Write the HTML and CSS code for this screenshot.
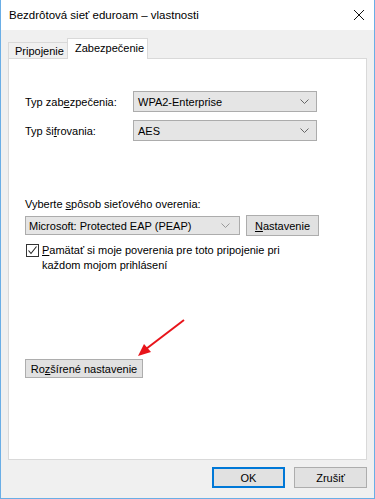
FILE: index.html
```html
<!DOCTYPE html>
<html>
<head>
    <title>Bezdrôtová sieť eduroam – vlastnosti</title>
    <link rel="stylesheet" href="styles.css">
</head>
<body>
    <div class="window">
        <div class="titlebar">
            <span class="title">Bezdrôtová sieť eduroam – vlastnosti</span>
            <svg class="close" width="12" height="12" viewBox="0 0 12 12">
                <path d="M1 1 L11 11 M11 1 L1 11" stroke="#111" stroke-width="1" fill="none"/>
            </svg>
        </div>
        <div class="client">
            <div class="tabs">
                <div class="tab">Pripojenie</div>
                <div class="tab active">Zabezpečenie</div>
            </div>
            <div class="panel">
                <div class="form-grid">
                    <label>Typ zab<u>e</u>zpečenia:</label>
                    <div class="select">
                        <span>WPA2-Enterprise</span>
                        <svg width="9" height="5" viewBox="0 0 9 5"><path d="M0.5 0.5 L4.5 4.5 L8.5 0.5" stroke="#666" fill="none"/></svg>
                    </div>
                    <label>Typ ši<u>f</u>rovania:</label>
                    <div class="select">
                        <span>AES</span>
                        <svg width="9" height="5" viewBox="0 0 9 5"><path d="M0.5 0.5 L4.5 4.5 L8.5 0.5" stroke="#666" fill="none"/></svg>
                    </div>
                </div>

                <div class="auth">
                    <div class="auth-label">Vyberte <u>s</u>pôsob sieťového overenia:</div>
                    <div class="auth-row">
                        <div class="select wide">
                            <span>Microsoft: Protected EAP (PEAP)</span>
                            <svg width="9" height="5" viewBox="0 0 9 5"><path d="M0.5 0.5 L4.5 4.5 L8.5 0.5" stroke="#999" fill="none"/></svg>
                        </div>
                        <button class="btn settings"><u>N</u>astavenie</button>
                    </div>
                    <div class="check-row">
                        <span class="checkbox">
                            <svg width="11" height="11" viewBox="0 0 11 11"><path d="M1.5 5.5 L4 8.5 L9.5 1.5" stroke="#222" stroke-width="1.1" fill="none"/></svg>
                        </span>
                        <span class="check-text"><u>P</u>amätať si moje poverenia pre toto pripojenie pri<br>každom mojom prihlásení</span>
                    </div>
                </div>

                <div class="advanced">
                    <button class="btn adv">Ro<u>z</u>šírené nastavenie</button>
                    <svg class="arrow" width="60" height="50" viewBox="0 0 60 50">
                        <path d="M56 2 L18 31" stroke="#e8141a" stroke-width="2" fill="none"/>
                        <path d="M10 38 L16 26 L23 34 Z" fill="#e8141a"/>
                    </svg>
                </div>
            </div>
            <div class="footer">
                <button class="btn ok">OK</button>
                <button class="btn">Zrušiť</button>
            </div>
        </div>
    </div>
</body>
</html>
```

FILE: styles.css
```css
body {
    margin: 0;
    font-family: 'Liberation Sans', Arial, sans-serif;
    font-size: 11px;
    color: #000;
    background-color: #fff;
}
.window {
    width: 375px;
    height: 499px;
    box-sizing: border-box;
    border: 1px solid #6aaee6;
    border-top: none;
    display: flex;
    flex-direction: column;
}
.titlebar {
    height: 30px;
    background-color: #fff;
    display: flex;
    align-items: center;
    justify-content: space-between;
    padding: 0 9px 0 8px;
    flex-shrink: 0;
}
.title {
    font-size: 11.5px;
}
.client {
    flex: 1;
    background-color: #f0f0f0;
    padding: 8px 7px 0 7px;
    display: flex;
    flex-direction: column;
}
.tabs {
    display: flex;
    align-items: flex-end;
    height: 20px;
}
.tab {
    width: 52px;
    height: 15px;
    line-height: 16px;
    padding-left: 6px;
    box-sizing: content-box;
    border: 1px solid #d9d9d9;
    border-bottom: none;
    border-right: none;
    background-color: #f0f0f0;
}
.tab.active {
    width: 72px;
    height: 20px;
    line-height: 18px;
    background-color: #fff;
    padding-left: 7px;
    margin-bottom: -1px;
    position: relative;
    z-index: 1;
    border-right: 1px solid #d9d9d9;
}
.panel {
    height: 402px;
    background-color: #fff;
    border: 1px solid #d9d9d9;
    padding: 32px 47px 0 16px;
    box-sizing: border-box;
}
.form-grid {
    display: grid;
    grid-template-columns: 108px 184px;
    row-gap: 8px;
    align-items: center;
}
.select {
    height: 21px;
    box-sizing: border-box;
    border: 1px solid #acacac;
    background-color: #e5e5e5;
    display: flex;
    align-items: center;
    justify-content: space-between;
    padding: 0 7px 0 4px;
}
.select svg {
    flex-shrink: 0;
}
.auth {
    margin-top: 57px;
}
.auth-label {
    margin-bottom: 5px;
}
.auth-row {
    display: flex;
    gap: 6px;
    align-items: center;
}
.select.wide {
    width: 215px;
    height: 19px;
    padding-right: 9px;
    padding-left: 3px;
}
.btn {
    font-family: 'Liberation Sans', Arial, sans-serif;
    font-size: 11px;
    color: #000;
    background-color: #e1e1e1;
    border: 1px solid #adadad;
    padding: 0;
    height: 21px;
    box-sizing: border-box;
    white-space: nowrap;
}
.settings {
    width: 73px;
}
.check-row {
    display: flex;
    margin-top: 8px;
    align-items: flex-start;
}
.checkbox {
    width: 13px;
    height: 13px;
    box-sizing: border-box;
    border: 1px solid #333;
    display: flex;
    align-items: center;
    justify-content: center;
    margin: 0 3px 0 1px;
    flex-shrink: 0;
}
.check-text {
    line-height: 15px;
    margin-top: -1px;
    white-space: nowrap;
}
.advanced {
    position: relative;
    margin-top: 86px;
}
.adv {
    width: 118px;
    height: 19px;
}
.arrow {
    position: absolute;
    left: 103px;
    top: -41px;
}
.footer {
    display: flex;
    justify-content: flex-end;
    gap: 9px;
    padding-top: 7px;
}
.footer .btn {
    width: 73px;
    height: 21px;
}
.footer .ok {
    border: 2px solid #0078d7;
}
```
